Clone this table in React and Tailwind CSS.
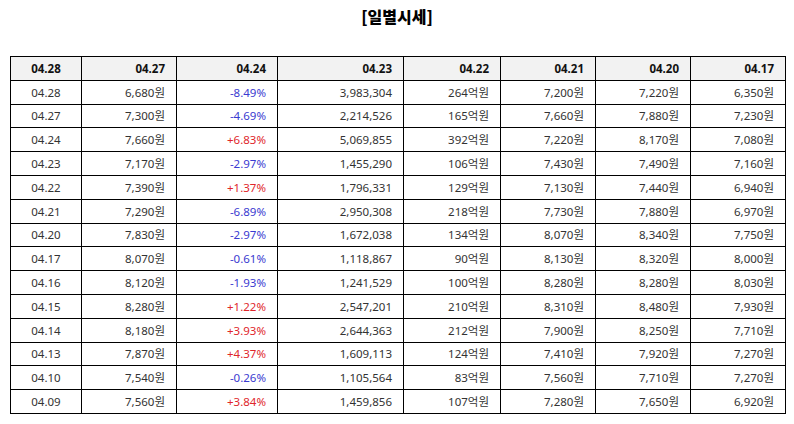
import React from "react";

const headers = ["04.28", "04.27", "04.24", "04.23", "04.22", "04.21", "04.20", "04.17"];
const widths = [71, 95, 101, 126, 97, 95, 95, 95];

const rows = [
  ["04.28", "6,680원", "-8.49%", "3,983,304", "264억원", "7,200원", "7,220원", "6,350원"],
  ["04.27", "7,300원", "-4.69%", "2,214,526", "165억원", "7,660원", "7,880원", "7,230원"],
  ["04.24", "7,660원", "+6.83%", "5,069,855", "392억원", "7,220원", "8,170원", "7,080원"],
  ["04.23", "7,170원", "-2.97%", "1,455,290", "106억원", "7,430원", "7,490원", "7,160원"],
  ["04.22", "7,390원", "+1.37%", "1,796,331", "129억원", "7,130원", "7,440원", "6,940원"],
  ["04.21", "7,290원", "-6.89%", "2,950,308", "218억원", "7,730원", "7,880원", "6,970원"],
  ["04.20", "7,830원", "-2.97%", "1,672,038", "134억원", "8,070원", "8,340원", "7,750원"],
  ["04.17", "8,070원", "-0.61%", "1,118,867", "90억원", "8,130원", "8,320원", "8,000원"],
  ["04.16", "8,120원", "-1.93%", "1,241,529", "100억원", "8,280원", "8,280원", "8,030원"],
  ["04.15", "8,280원", "+1.22%", "2,547,201", "210억원", "8,310원", "8,480원", "7,930원"],
  ["04.14", "8,180원", "+3.93%", "2,644,363", "212억원", "7,900원", "8,250원", "7,710원"],
  ["04.13", "7,870원", "+4.37%", "1,609,113", "124억원", "7,410원", "7,920원", "7,270원"],
  ["04.10", "7,540원", "-0.26%", "1,105,564", "83억원", "7,560원", "7,710원", "7,270원"],
  ["04.09", "7,560원", "+3.84%", "1,459,856", "107억원", "7,280원", "7,650원", "6,920원"],
];

export default function App() {
  return (
    <div
      className="w-[794px] h-[424px] bg-white text-[#333] overflow-hidden"
      style={{ fontFamily: '"Noto Sans", "Noto Sans CJK KR", sans-serif' }}
    >
      <div className="pt-[5px] h-[56px] text-center">
        <h1
          className="text-[16px] leading-[22px] font-extrabold text-black"
          style={{ fontFamily: '"Noto Sans CJK KR", sans-serif' }}
        >
          [일별시세]
        </h1>
      </div>
      <div className="pl-[10px]">
        <table className="table-fixed border-collapse w-[775px] text-[11.5px]">
          <colgroup>
            {widths.map((w, i) => (
              <col key={i} style={{ width: w }} />
            ))}
          </colgroup>
          <thead>
            <tr className="h-[23.8px] bg-[#f2f2f2]">
              {headers.map((h, i) => (
                <th
                  key={i}
                  className={`border border-black font-bold text-[#111] p-0 ${
                    i === 0 ? "text-center" : "text-right pr-[11px]"
                  }`}
                >
                  {h}
                </th>
              ))}
            </tr>
          </thead>
          <tbody>
            {rows.map((r, ri) => (
              <tr key={ri} className="h-[23.8px]">
                {r.map((c, ci) => {
                  let color = "";
                  if (ci === 2) color = c.startsWith("+") ? "text-[#e0262b]" : "text-[#3a3ad0]";
                  return (
                    <td
                      key={ci}
                      className={`border border-black p-0 ${color} ${
                        ci === 0 ? "text-center" : "text-right pr-[11px]"
                      }`}
                    >
                      {c}
                    </td>
                  );
                })}
              </tr>
            ))}
          </tbody>
        </table>
      </div>
    </div>
  );
}
